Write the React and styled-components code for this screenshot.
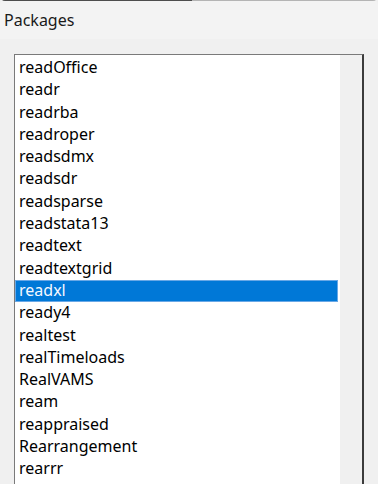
import React, { useState } from "react";
import styled, { createGlobalStyle } from "styled-components";

const packages = [
  "readOffice",
  "readr",
  "readrba",
  "readroper",
  "readsdmx",
  "readsdr",
  "readsparse",
  "readstata13",
  "readtext",
  "readtextgrid",
  "readxl",
  "ready4",
  "realtest",
  "realTimeloads",
  "RealVAMS",
  "ream",
  "reappraised",
  "Rearrangement",
  "rearrr",
];

const GlobalStyle = createGlobalStyle`
  html, body {
    margin: 0;
    padding: 0;
    background: #f0f0f0;
  }
  body {
    font-family: "Noto Sans", "Open Sans", sans-serif;
  }
`;

const Window = styled.div`
  width: 378px;
  height: 484px;
  overflow: hidden;
  background: #f0f0f0;
  border-top-left-radius: 5px;
  border-top-right-radius: 5px;
`;

const TitleBar = styled.header`
  height: 37px;
  background: #f3f3f3;
  border-top: 1px solid transparent;
  border-image: linear-gradient(to right, #4d4d4d 0 192px, #b4b4b4 192px) 1;
  border-bottom: 0;
  border-left: 0;
  border-right: 0;
  display: flex;
  align-items: center;
  padding-left: 4px;
  padding-bottom: 1px;
  font-size: 16px;
  color: #1a1a1a;
`;

const Body = styled.main`
  padding: 15px 0 0 14px;
`;

const ListBox = styled.div`
  width: 347px;
  height: 440px;
  border: 1px solid #7a7a7a;
  border-right: 2px solid #3c3c3c;
  border-bottom: 0;
  display: flex;
  background: #fff;
`;

const Items = styled.ul`
  flex: 1;
  list-style: none;
  margin: 0;
  padding: 2px 0 0;
`;

const Item = styled.li`
  height: 22.3px;
  line-height: 21px;
  padding-left: 4px;
  margin-right: 2px;
  font-size: 16px;
  white-space: nowrap;
  color: ${(p) => (p.$selected ? "#f4f8ff" : "#000")};
  background: ${(p) => (p.$selected ? "#0078d7" : "transparent")};
  box-shadow: ${(p) => (p.$selected ? "inset 0 0 0 1px #69a8e6" : "none")};
  cursor: default;
`;

const ScrollTrack = styled.div`
  width: 22px;
  background: #f0f0f0;
`;

const App = () => {
  const [selected, setSelected] = useState("readxl");

  return (
    <>
      <GlobalStyle />
      <Window>
        <TitleBar>Packages</TitleBar>
        <Body>
          <ListBox>
            <Items>
              {packages.map((name) => (
                <Item
                  key={name}
                  $selected={name === selected}
                  onClick={() => setSelected(name)}
                >
                  {name}
                </Item>
              ))}
            </Items>
            <ScrollTrack />
          </ListBox>
        </Body>
      </Window>
    </>
  );
};

export default App;
